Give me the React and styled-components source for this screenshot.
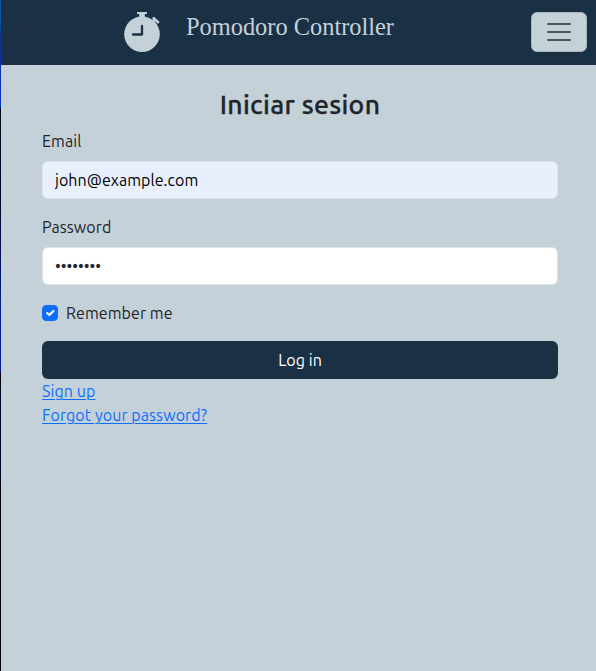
import React, { useState } from "react";
import styled, { createGlobalStyle } from "styled-components";

const navy = "#1a3045";
const mist = "#c5d1d9";

const GlobalStyle = createGlobalStyle`
  *, *::before, *::after { box-sizing: border-box; }
  body {
    margin: 0;
    background: ${mist};
    color: #212529;
    font: 400 16px/24px "Ubuntu", "Noto Sans", sans-serif;
  }
`;

const Page = styled.div`
  display: grid;
  grid-template-columns: 1px 1fr;
  min-height: 671px;
`;

const Edge = styled.div`
  background: linear-gradient(#0a5aa8 0, #0a55a8 24px, #06309a 36px, #0b36c0 106px, #020a1c 109px,
    #00052c 200px, #03208a 310px, #03208a 370px, #000 375px, #000433 400px, #00042a 470px, #000 500px);
`;

const Navbar = styled.header`
  display: flex;
  align-items: flex-start;
  height: 65px;
  padding: 12px 9px 0 122px;
  background: ${navy};
`;

const Logo = styled.svg`
  width: 38px;
  height: 41px;
  flex: none;
`;

const Brand = styled.span`
  margin: -1px auto 0 25px;
  color: ${mist};
  font: 24.4px/32px "Liberation Serif", serif;
  white-space: nowrap;
`;

const Toggler = styled.button`
  display: grid;
  place-items: center;
  width: 56px;
  height: 40px;
  padding: 0;
  border: 1px solid #a9b4bc;
  border-radius: 6px;
  background: ${mist};
`;

const Main = styled.main`
  padding: 24px 38px 0 41px;
`;

const Title = styled.h1`
  margin: 0 0 2px;
  font-size: 26.56px;
  font-weight: 500;
  line-height: 30px;
  letter-spacing: 0.3px;
  text-align: center;
  -webkit-text-stroke: 0.3px currentColor;
`;

const Form = styled.form`
  display: flex;
  flex-direction: column;
`;

const Field = styled.div`
  display: flex;
  flex-direction: column;
  gap: 8px;
  margin: ${(p) => p.$margin};
`;

const Label = styled.label`
  align-self: flex-start;
  letter-spacing: 0.08px;
`;

const Input = styled.input`
  width: 100%;
  height: 38px;
  padding: 6px 12px;
  border: 1px solid #dee2e6;
  border-radius: 6px;
  outline: none;
  background: ${(p) => (p.$filled ? "#e8f0fe" : "#fff")};
  color: ${(p) => (p.$filled ? "#000" : "#212529")};
  font: inherit;
  letter-spacing: ${(p) => (p.$filled ? "0.06px" : "0")};
`;

const CheckRow = styled.div`
  display: flex;
  align-items: center;
  gap: 8px;
  height: 24px;
  margin-bottom: 16px;
`;

const Checkbox = styled.button`
  width: 16px;
  height: 16px;
  padding: 0;
  border: 1px solid #0d6efd;
  border-radius: 4px;
  background: ${(p) => (p.$checked ? "#0d6efd" : "#fff")};
  display: grid;
  place-items: center;
`;

const Submit = styled.button`
  height: 38px;
  padding: 0;
  border: 0;
  border-radius: 6px;
  background: ${navy};
  color: #fff;
  font: inherit;
  letter-spacing: 0.04px;
`;

const Links = styled.nav`
  display: flex;
  flex-direction: column;
  align-items: flex-start;
`;

const TextLink = styled.a`
  color: #0d6efd;
  text-decoration: underline;
  text-decoration-thickness: 1px;
  text-underline-offset: 2px;
  letter-spacing: 0.09px;
`;

function Stopwatch() {
  return (
    <Logo viewBox="0 0 38 41" aria-hidden="true">
      <circle cx="19" cy="22.2" r="17.8" fill={mist} />
      <path d="M14 0h10v2h-2.2v4h-5.6V2H14z" fill={mist} />
      <path d="M29.9 9.4l2.4-2.6" stroke={mist} strokeWidth="2.8" />
      <path d="M30.7 6.2l4.4 4" stroke={mist} strokeWidth="2.6" strokeLinecap="round" />
      <path d="M19 13.9v8.6h-9" fill="none" stroke={navy} strokeWidth="2.3" strokeLinecap="round" strokeLinejoin="round" />
    </Logo>
  );
}

export default function App() {
  const [email, setEmail] = useState("john@example.com");
  const [password, setPassword] = useState("password");
  const [remember, setRemember] = useState(true);

  return (
    <>
      <GlobalStyle />
      <Page>
        <Edge />
        <div>
          <Navbar>
            <Stopwatch />
            <Brand>Pomodoro Controller</Brand>
            <Toggler type="button" aria-label="Menu">
              <svg width="30" height="30" viewBox="0 0 30 30">
                <path d="M4 7h22M4 15h22M4 23h22" stroke="#4c535a" strokeWidth="2" strokeLinecap="round" />
              </svg>
            </Toggler>
          </Navbar>
          <Main>
            <Title>Iniciar sesion</Title>
            <Form onSubmit={(e) => e.preventDefault()}>
              <Field $margin="8px 0 16px">
                <Label htmlFor="email">Email</Label>
                <Input id="email" $filled value={email} onChange={(e) => setEmail(e.target.value)} />
              </Field>
              <Field $margin="0 0 16px">
                <Label htmlFor="password">Password</Label>
                <Input id="password" type="password" value={password} onChange={(e) => setPassword(e.target.value)} />
              </Field>
              <CheckRow>
                <Checkbox id="remember" type="button" role="checkbox" aria-checked={remember} $checked={remember} onClick={() => setRemember(!remember)}>
                  {remember && (
                    <svg width="14" height="14" viewBox="0 0 20 20">
                      <path d="m6 10 3 3 6-6" fill="none" stroke="#fff" strokeWidth="3" strokeLinecap="round" strokeLinejoin="round" />
                    </svg>
                  )}
                </Checkbox>
                <Label htmlFor="remember">Remember me</Label>
              </CheckRow>
              <Submit>Log in</Submit>
            </Form>
            <Links>
              <TextLink href="#signup">Sign up</TextLink>
              <TextLink href="#forgot">Forgot your password?</TextLink>
            </Links>
          </Main>
        </div>
      </Page>
    </>
  );
}
